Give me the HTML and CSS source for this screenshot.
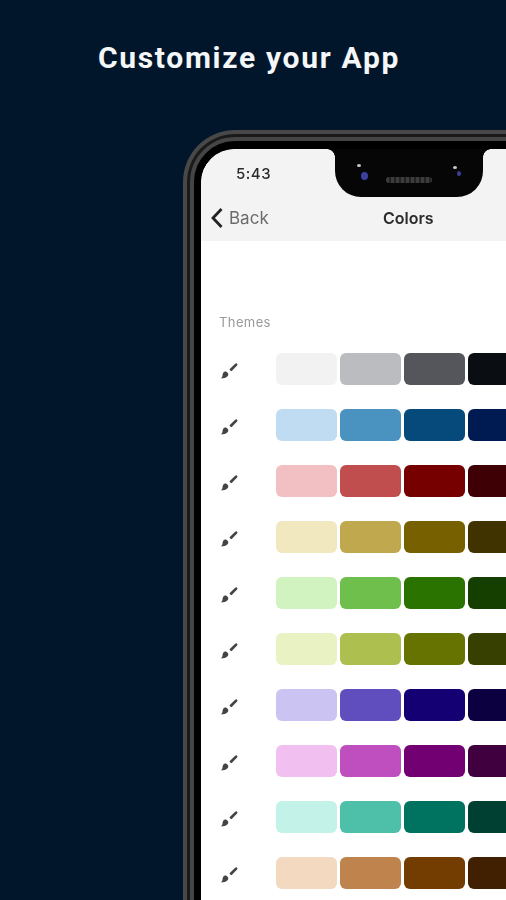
FILE: index.html
```html
<!DOCTYPE html>
<html lang="en">
<head>
<meta charset="utf-8">
<title>Customize your App</title>
<link rel="stylesheet" href="styles.css">
</head>
<body>
<h1 class="headline">Customize your App</h1>
<div class="phone">
  <div class="bezel">
    <div class="screen">
      <div class="notch">
        <span class="lens lens-left"></span>
        <span class="speaker"></span>
        <span class="lens lens-right"></span>
      </div>
      <header class="appbar">
        <div class="status">5:43</div>
        <div class="nav">
          <a class="back">
            <svg class="chevron" viewBox="0 0 14 22" aria-hidden="true"><path d="M11.5 2 3 11l8.500 9" fill="none" stroke="#222" stroke-width="2.800"/></svg>
            <span>Back</span>
          </a>
          <span class="title">Colors</span>
        </div>
      </header>
      <main class="content">
        <div class="section-label">Themes</div>
        <div class="rows">
          <div class="row"><svg class="brush" viewBox="0 0 20 20"><use href="#brush"/></svg><div class="swatches"><i class="sw" style="background:#f2f2f3"></i><i class="sw" style="background:#bbbcc0"></i><i class="sw" style="background:#55565b"></i><i class="sw" style="background:#0a0e12"></i></div></div>
          <div class="row"><svg class="brush" viewBox="0 0 20 20"><use href="#brush"/></svg><div class="swatches"><i class="sw" style="background:#c0dcf3"></i><i class="sw" style="background:#4a92c0"></i><i class="sw" style="background:#054a7a"></i><i class="sw" style="background:#001a52"></i></div></div>
          <div class="row"><svg class="brush" viewBox="0 0 20 20"><use href="#brush"/></svg><div class="swatches"><i class="sw" style="background:#f2bfc3"></i><i class="sw" style="background:#c04e4e"></i><i class="sw" style="background:#760000"></i><i class="sw" style="background:#3e0005"></i></div></div>
          <div class="row"><svg class="brush" viewBox="0 0 20 20"><use href="#brush"/></svg><div class="swatches"><i class="sw" style="background:#f2e8bf"></i><i class="sw" style="background:#bfa84e"></i><i class="sw" style="background:#776000"></i><i class="sw" style="background:#413300"></i></div></div>
          <div class="row"><svg class="brush" viewBox="0 0 20 20"><use href="#brush"/></svg><div class="swatches"><i class="sw" style="background:#d0f3bf"></i><i class="sw" style="background:#6fbf4d"></i><i class="sw" style="background:#2a7300"></i><i class="sw" style="background:#153f00"></i></div></div>
          <div class="row"><svg class="brush" viewBox="0 0 20 20"><use href="#brush"/></svg><div class="swatches"><i class="sw" style="background:#e9f2c3"></i><i class="sw" style="background:#adbf4e"></i><i class="sw" style="background:#667300"></i><i class="sw" style="background:#374000"></i></div></div>
          <div class="row"><svg class="brush" viewBox="0 0 20 20"><use href="#brush"/></svg><div class="swatches"><i class="sw" style="background:#cbc3f2"></i><i class="sw" style="background:#604ebf"></i><i class="sw" style="background:#150073"></i><i class="sw" style="background:#0c0040"></i></div></div>
          <div class="row"><svg class="brush" viewBox="0 0 20 20"><use href="#brush"/></svg><div class="swatches"><i class="sw" style="background:#f2c0f0"></i><i class="sw" style="background:#bf4ebf"></i><i class="sw" style="background:#730073"></i><i class="sw" style="background:#400040"></i></div></div>
          <div class="row"><svg class="brush" viewBox="0 0 20 20"><use href="#brush"/></svg><div class="swatches"><i class="sw" style="background:#c3f2e8"></i><i class="sw" style="background:#4ebfa8"></i><i class="sw" style="background:#007360"></i><i class="sw" style="background:#004033"></i></div></div>
          <div class="row"><svg class="brush" viewBox="0 0 20 20"><use href="#brush"/></svg><div class="swatches"><i class="sw" style="background:#f2d9c0"></i><i class="sw" style="background:#bf844e"></i><i class="sw" style="background:#733c00"></i><i class="sw" style="background:#402000"></i></div></div>
        </div>
      </main>
    </div>
  </div>
</div>
<svg class="defs" aria-hidden="true">
  <symbol id="brush" viewBox="0 0 20 20">
    <path d="M10.500 8.200 16.200 2.700a1.300 1.300 0 0 1 1.900 1.800l-5.600 5.700-1.200-.8z" fill="#444"/>
    <path d="M5.800 10.600c1.600-.5 3.600 1.200 3.500 3-.1 2-2.700 3.700-5.200 3.700H1.800c1-.6 1.500-1.400 1.700-2.800.2-1.800.8-3.300 2.300-3.900z" fill="#444"/>
  </symbol>
</svg>
</body>
</html>
```
FILE: styles.css
```css
html, body {
  margin: 0;
  height: 900px;
  overflow: hidden;
  background: #01162b;
}
body {
  display: flex;
  flex-direction: column;
  font-family: "Inter", "Liberation Sans", sans-serif;
}
.headline {
  flex: none;
  margin: 39px 0 0;
  height: 91px;
  box-sizing: border-box;
  text-align: center;
  padding-right: 8px;
  font-family: "Roboto", sans-serif;
  font-size: 30px;
  line-height: 37px;
  font-weight: 700;
  letter-spacing: 1.7px;
  color: #f4f6f8;
  white-space: nowrap;
}
.phone {
  flex: none;
  margin-left: 183px;
  width: 420px;
  height: 900px;
  padding: 4px;
  box-sizing: border-box;
  border-radius: 52px;
  background: #484848;
}
.bezel {
  height: 100%;
  box-sizing: border-box;
  padding: 3px;
  border-radius: 48px;
  background: #1a1a1a;
}
.screen {
  position: relative;
  height: 100%;
  box-sizing: border-box;
  border: solid #000;
  border-width: 12px 11px;
  border-radius: 45px;
  background: #fff;
  background-clip: padding-box;
  filter: blur(0.35px);
}
.screen::before {
  content: "";
  position: absolute;
  inset: -12px -11px;
  border: 4px solid #454545;
  border-radius: 45px;
  pointer-events: none;
  z-index: 3;
}
.notch {
  position: absolute;
  top: 0;
  left: 134px;
  width: 148px;
  height: 48px;
  border-radius: 0 0 26px 26px;
  background: #060606;
  z-index: 2;
}
.notch::before,
.notch::after {
  content: "";
  position: absolute;
  top: 0;
  width: 8px;
  height: 8px;
  background: radial-gradient(circle at 0 100%, transparent 7.500px, #060606 8px);
}
.notch::before { left: -8px; }
.notch::after {
  right: -8px;
  transform: scaleX(-1);
}
.lens {
  position: absolute;
  top: 23px;
  width: 7px;
  height: 8px;
  border-radius: 50%;
  background: #3d3f9c;
}
.lens::before {
  content: "";
  position: absolute;
  top: -8px;
  left: -4px;
  width: 4px;
  height: 3px;
  border-radius: 50%;
  background: #c9c9c9;
}
.lens-left { left: 26px; }
.lens-right {
  right: 22px;
  top: 22px;
  width: 4px;
  height: 5px;
}
.lens-right::before { top: -5px; }
.speaker {
  position: absolute;
  left: 51px;
  top: 28px;
  width: 46px;
  height: 6px;
  border-radius: 3px;
  background: repeating-linear-gradient(90deg, #3c3c3c 0 3px, #222 3px 5px);
}
.appbar {
  height: 92px;
  box-sizing: border-box;
  border-radius: 34px 34px 0 0;
  background: #f3f3f3;
  color: #2c2c2c;
}
.status {
  padding: 15px 0 0 35px;
  font-size: 15px;
  line-height: 20px;
  letter-spacing: 0.5px;
  font-weight: 500;
}
.nav {
  position: relative;
  display: flex;
  align-items: center;
  margin-top: 23px;
  height: 22px;
  padding-left: 9px;
}
.back {
  display: flex;
  align-items: center;
  gap: 5px;
  font-size: 17px;
  color: #6b6b6b;
}
.chevron {
  width: 14px;
  height: 22px;
}
.title {
  position: absolute;
  left: 182px;
  top: 0;
  font-size: 16px;
  line-height: 22px;
  font-weight: 600;
  color: #2b2b2b;
}
.content {
  padding: 73px 0 0 18px;
}
.section-label {
  font-size: 13px;
  line-height: 16px;
  letter-spacing: 0.4px;
  color: #9a9a9a;
}
.rows {
  display: flex;
  flex-direction: column;
  gap: 24px;
  margin-top: 23px;
}
.row {
  display: flex;
  align-items: center;
  height: 32px;
}
.brush {
  flex: none;
  width: 20px;
  height: 20px;
  margin-top: 4px;
}
.swatches {
  display: flex;
  gap: 3px;
  margin-left: 37px;
}
.sw {
  flex: none;
  width: 61px;
  height: 32px;
  border-radius: 6px;
}
.defs {
  position: absolute;
  width: 0;
  height: 0;
}
```
